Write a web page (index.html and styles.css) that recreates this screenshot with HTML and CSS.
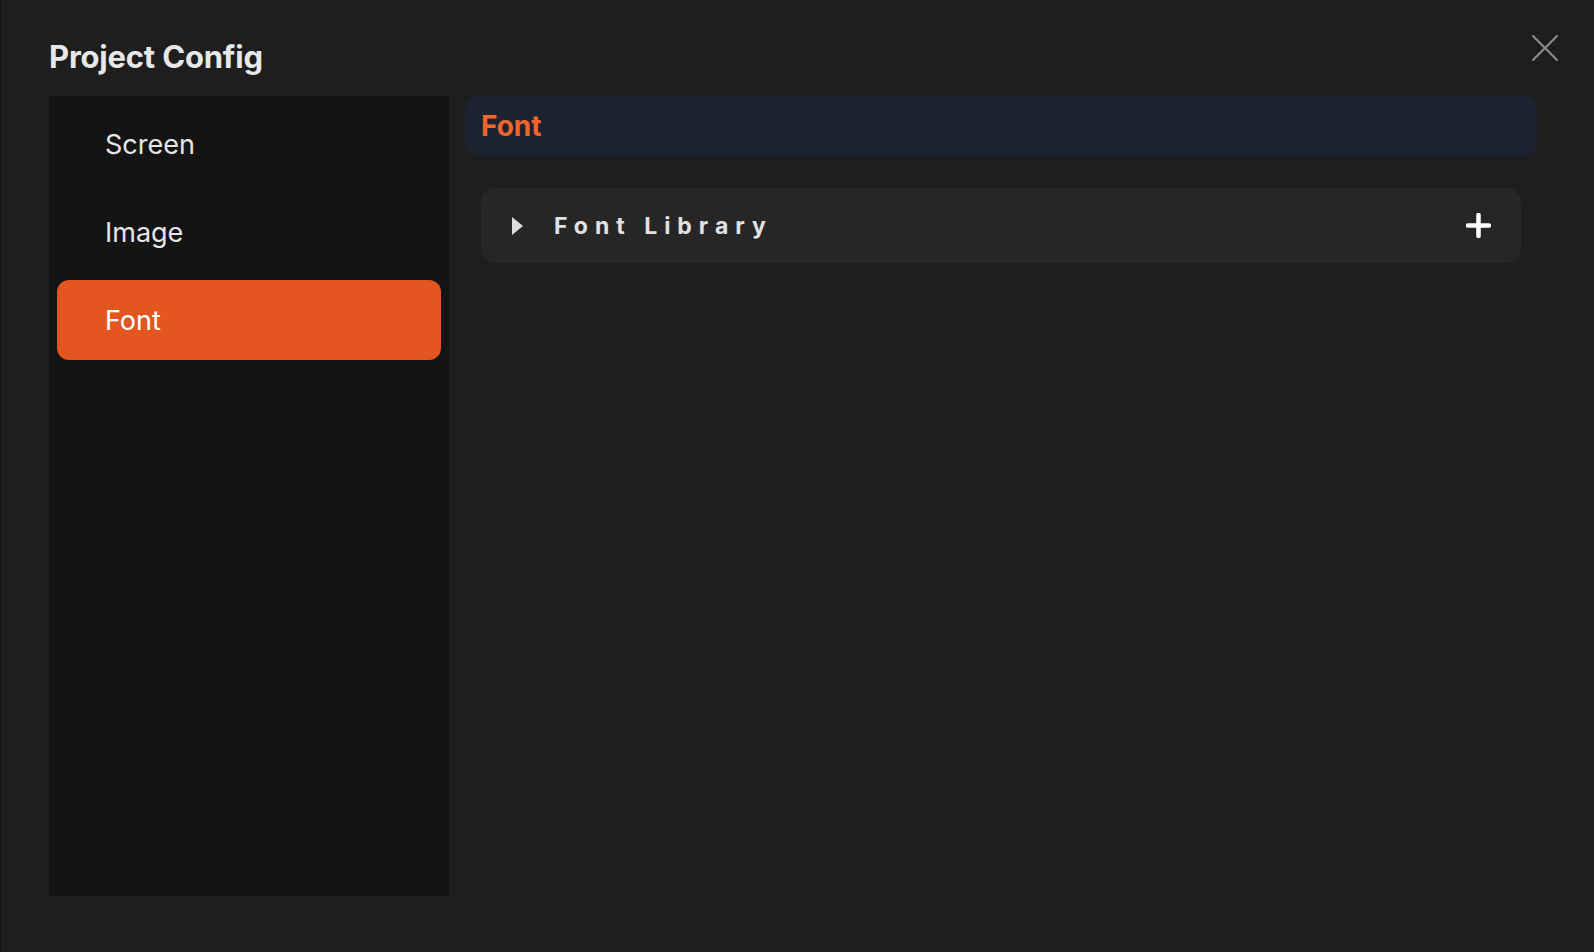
FILE: index.html
```html
<!DOCTYPE html>
<html lang="en">
<head>
    <meta charset="UTF-8">
    <meta name="viewport" content="width=device-width, initial-scale=1.0">
    <title>Project Config</title>
    <link rel="stylesheet" href="styles.css">
</head>
<body>
    <div class="modal">
        <div class="modal-head">
            <h1>Project Config</h1>
            <button class="close" aria-label="Close">
                <svg width="26" height="26" viewBox="0 0 26 26">
                    <path d="M1 1 L25 25 M25 1 L1 25" stroke="#8a8a8a" stroke-width="2.2" stroke-linecap="round"/>
                </svg>
            </button>
        </div>

        <div class="modal-body">
            <div class="sidebar">
                <div class="menu-item">Screen</div>
                <div class="menu-item">Image</div>
                <div class="menu-item active">Font</div>
            </div>

            <div class="content">
                <div class="section-title">Font</div>

                <div class="group">
                    <div class="group-head">
                        <svg class="caret" width="11" height="18" viewBox="0 0 11 18">
                            <path d="M0 0 L11 9 L0 18 Z" fill="#dedede"/>
                        </svg>
                        <span class="group-name">Font Library</span>
                        <button class="add" aria-label="Add font">
                            <svg width="25" height="25" viewBox="0 0 25 25">
                                <path d="M12.5 2 V23 M2 12.5 H23" stroke="#ffffff" stroke-width="4.5" stroke-linecap="round"/>
                            </svg>
                        </button>
                    </div>
                </div>
            </div>
        </div>
    </div>
</body>
</html>
```

FILE: styles.css
```css
body {
    margin: 0;
    background: #1e1e1e;
    font-family: 'Inter', 'Liberation Sans', sans-serif;
    color: #e6e6e6;
}
.modal {
    height: 952px;
    box-sizing: border-box;
    padding: 0 57px 56px 48px;
    border-left: 1px solid #141414;
    display: flex;
    flex-direction: column;
}
.modal-head {
    height: 96px;
    position: relative;
}
h1 {
    margin: 0;
    padding-top: 39px;
    font-size: 31px;
    font-weight: 700;
    color: #e8e8e8;
    line-height: 36px;
    letter-spacing: -0.2px;
}
.close {
    position: absolute;
    top: 35px;
    right: -21px;
    background: none;
    border: none;
    padding: 0;
    width: 26px;
    height: 26px;
    cursor: pointer;
}
.modal-body {
    flex: 1;
    display: flex;
    gap: 16px;
}
.sidebar {
    width: 400px;
    background: #141414;
    padding: 8px;
    box-sizing: border-box;
    display: flex;
    flex-direction: column;
    gap: 8px;
}
.menu-item {
    height: 80px;
    display: flex;
    align-items: center;
    padding-left: 48px;
    font-size: 27px;
    color: #e6e6e6;
    border-radius: 12px;
    cursor: pointer;
}
.menu-item.active {
    background: #e4561f;
    color: #ffffff;
}
.content {
    flex: 1;
    display: flex;
    flex-direction: column;
}
.section-title {
    height: 60px;
    background: #1d2230;
    border-radius: 12px;
    display: flex;
    align-items: center;
    padding-left: 16px;
    font-size: 28px;
    font-weight: 700;
    color: #f0652a;
}
.group {
    margin: 32px 16px 0;
    background: #262626;
    border-radius: 14px;
}
.group-head {
    height: 75px;
    display: flex;
    align-items: center;
    padding: 0 30px 0 31px;
}
.caret {
    margin-right: 31px;
}
.group-name {
    flex: 1;
    font-size: 23px;
    font-weight: 700;
    letter-spacing: 7px;
    color: #e2e2e2;
}
.add {
    background: none;
    border: none;
    padding: 0;
    width: 25px;
    height: 25px;
    cursor: pointer;
}
```
